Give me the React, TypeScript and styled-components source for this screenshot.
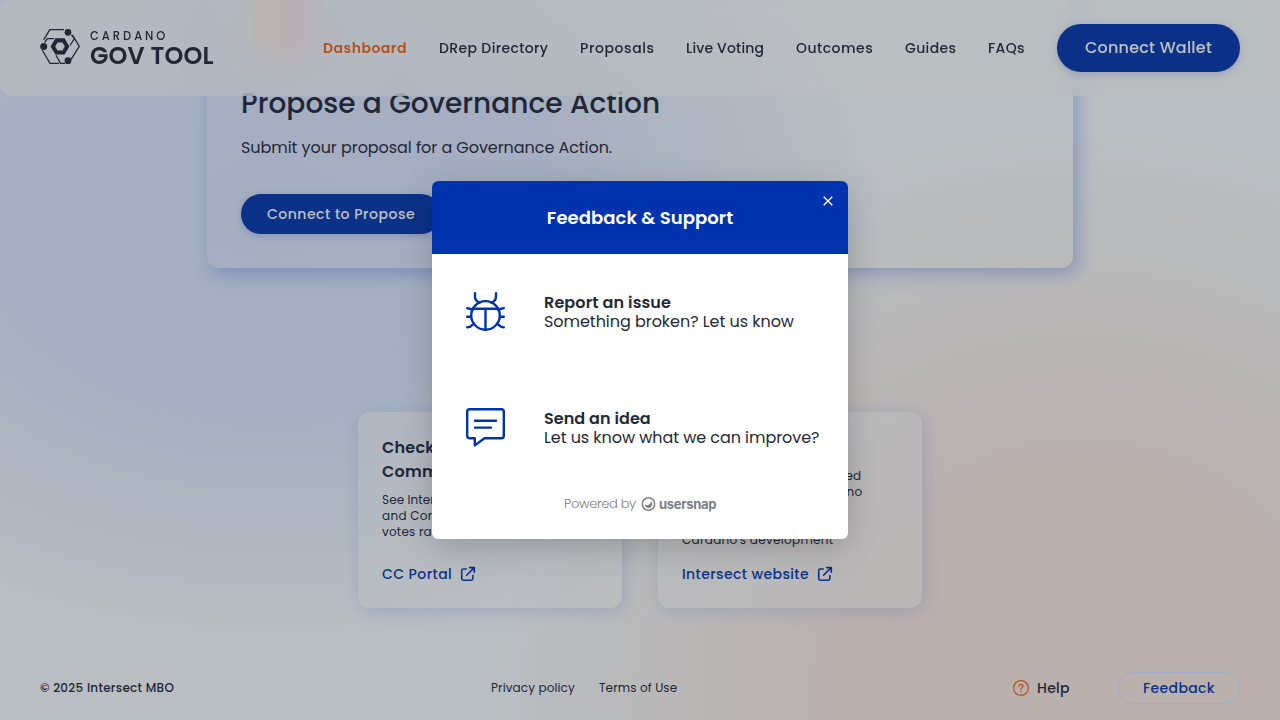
import React from "react";
import styled, { createGlobalStyle } from "styled-components";

const GlobalStyle = createGlobalStyle`
  * { box-sizing: border-box; }
  body { margin: 0; overflow: hidden; }
  h1, h2, p { margin: 0; }
  button { border: 0; padding: 0; background: none; font: inherit; }
`;

const ink = "#212438";
const blue = "#0033ad";

const Page = styled.div`
  height: 720px;
  overflow: hidden;
  display: flex;
  flex-direction: column;
  font-family: Poppins, Inter, sans-serif;
  color: ${ink};
  background:
    radial-gradient(ellipse 590px 570px at 1080px 700px, rgb(251, 232, 224) 0%, rgba(251, 232, 224, 0.95) 42%, rgba(251, 234, 226, 0.5) 70%, rgba(251, 236, 230, 0) 100%),
    radial-gradient(ellipse 620px 440px at 270px 210px, rgb(221, 230, 252) 0%, rgba(221, 230, 252, 0.96) 45%, rgba(221, 231, 252, 0.45) 75%, rgba(221, 232, 252, 0) 100%),
    #fafdfe;
`;

const Text = styled.span<{ $size?: number; $line?: number; $weight?: number; $ls?: number; $color?: string; $width?: number }>`
  display: block;
  white-space: nowrap;
  font-size: ${(p) => p.$size ?? 14}px;
  line-height: ${(p) => p.$line ?? 20}px;
  font-weight: ${(p) => p.$weight ?? 400};
  letter-spacing: ${(p) => p.$ls ?? 0}px;
  color: ${(p) => p.$color ?? "inherit"};
  width: ${(p) => (p.$width ? `${p.$width}px` : "auto")};
`;

const Header = styled.header`
  position: fixed;
  inset: 0 0 auto 0;
  height: 96px;
  padding: 0 40px;
  display: flex;
  align-items: center;
  justify-content: space-between;
  border-radius: 12px;
  background: rgba(251, 252, 251, 0.65);
  backdrop-filter: blur(10px);
`;

const Brand = styled.div`
  display: flex;
  gap: 10px;
  height: 38px;
`;

const BrandName = styled.div`
  display: flex;
  flex-direction: column;
`;

const Nav = styled.nav`
  display: flex;
  align-items: center;
  gap: 32px;
`;

const Pill = styled.button<{ $w: number; $h: number }>`
  width: ${(p) => p.$w}px;
  height: ${(p) => p.$h}px;
  border-radius: ${(p) => p.$h / 2}px;
  display: flex;
  align-items: center;
  justify-content: center;
  background: ${blue};
  color: #fff;
  box-shadow: 0 2px 8px rgba(0, 51, 173, 0.22);
`;

const Hero = styled.section`
  flex: none;
  position: relative;
  width: 866px;
  height: 268px;
  margin: 0 auto;
  padding: 85px 34px 0;
  border-radius: 0 0 12px 12px;
`;

/* The panel is see-through, so its shadow is clipped away from the inside. */
const HeroShadow = styled.div`
  position: absolute;
  inset: 0;
  border-radius: 0 0 12px 12px;
  box-shadow: 5px 6px 18px rgba(47, 98, 220, 0.34);
  clip-path: polygon(evenodd, -40px 0, 910px 0, 910px 310px, -40px 310px, -40px 0, 0 0, 0 256px, 1px 261px, 4px 265px, 7px 267px, 12px 268px, 854px 268px, 859px 267px, 862px 265px, 865px 261px, 866px 256px, 866px 0, 0 0);
`;

const Glow = styled.div`
  position: absolute;
  left: 38px;
  top: -20px;
  width: 76px;
  height: 82px;
  border-radius: 45%;
  background: linear-gradient(90deg, #ffdcb4 15%, #ffb0b8 60%, #eccdf2);
  filter: blur(6px);
  opacity: 0.8;
`;

const Lead = styled.div`
  margin-top: 13px;
`;

const HeroButton = styled.div`
  margin-top: 34px;
`;

const Cards = styled.section`
  flex: none;
  display: flex;
  justify-content: center;
  gap: 36px;
  margin-top: 144px;
`;

const Card = styled.article`
  width: 264px;
  height: 196px;
  padding: 24px;
  border-radius: 12px;
  display: flex;
  flex-direction: column;
  background: rgba(251, 251, 251, 0.5);
  box-shadow: 2px 3px 18px rgba(47, 98, 220, 0.2);
`;

const Copy = styled.div`
  margin-top: 8px;
`;

const CardLink = styled.a`
  margin-top: auto;
  height: 20px;
  display: flex;
  align-items: center;
  gap: 8px;
  color: ${blue};
`;

const Footer = styled.footer`
  flex: none;
  display: grid;
  grid-template-columns: 451px 1fr auto;
  align-items: center;
  height: 64px;
  margin-top: 48px;
  padding: 0 40px;
`;

const Group = styled.div<{ $gap: number }>`
  display: flex;
  align-items: center;
  gap: ${(p) => p.$gap}px;
`;

const FeedbackButton = styled.button`
  width: 122px;
  height: 32px;
  border-radius: 16px;
  border: 1px solid #d6e2ff;
  display: flex;
  align-items: center;
  justify-content: center;
`;

const Backdrop = styled.div`
  position: fixed;
  inset: 0;
  display: flex;
  align-items: center;
  justify-content: center;
  background: rgba(38, 46, 56, 0.3);
`;

const Dialog = styled.div`
  position: relative;
  width: 416px;
  height: 358px;
  overflow: hidden;
  border-radius: 6px;
  background: #fff;
  color: #1f2a37;
`;

const DialogShadow = styled.div`
  border-radius: 6px;
  box-shadow: 0 8px 34px rgba(0, 0, 0, 0.2);
`;

const DialogTitle = styled.div`
  height: 73px;
  display: flex;
  align-items: center;
  justify-content: center;
  background: ${blue};
  color: #fff;
`;

const Close = styled.button`
  position: absolute;
  top: 15px;
  right: 15px;
  width: 10px;
  height: 10px;
  display: flex;
`;

const Option = styled.div`
  height: 116px;
  padding-left: 34px;
  display: flex;
  align-items: center;
  gap: 39px;

  > svg { margin-bottom: 1px; }
`;

const Powered = styled.div`
  display: flex;
  align-items: center;
  padding-left: 132px;
  height: 36px;
`;

const Brandmark = styled.span`
  margin-left: 3px;
  font: 700 13px/20px Inter, sans-serif;
  letter-spacing: -0.3px;
  color: #79808a;
`;

const LogoMark = () => (
  <svg width="40" height="36" viewBox="0 0 40 36" fill="none" stroke={ink} strokeWidth="1.3">
    <path d="M3.6 10.8 9.8.7H24M4.6 13.6 7.3 9.7H14M2.2 21 10 34.3H19M16 26.3 20.5 34.3H25" />
    <path d="M32.5 6.2 39.3 17.4 30.6 31.2M31.5 6 34.4 9.5 30 16.5" />
    <g fill={ink} stroke="none">
      <circle cx="28" cy="3.3" r="3.4" />
      <circle cx="3.7" cy="17.4" r="3.5" />
      <circle cx="28" cy="31.7" r="3.4" />
      <path fillRule="evenodd" d="M15.4 9.2h9.2l4.8 8.2-4.8 8.2h-9.2l-4.8-8.2zM17.5 13.4l-2.3 4 2.3 4h5l2.3-4-2.3-4z" />
    </g>
  </svg>
);

const ExternalIcon = () => (
  <svg width="16" height="16" viewBox="0 0 16 16" fill="none" stroke={blue} strokeWidth="1.6" strokeLinecap="round" strokeLinejoin="round">
    <path d="M6.2 3H3.4C2.3 3 1.7 3.6 1.7 4.6V12.6C1.7 13.6 2.3 14.2 3.4 14.2H11.2C12.3 14.2 12.9 13.6 12.9 12.6V9.6M9.6 1.6H14.3V6.3M14 1.9 6.6 9.3" />
  </svg>
);

const HelpIcon = () => (
  <svg width="16" height="16" viewBox="0 0 16 16" fill="none" stroke="#f26114" strokeWidth="1.2" strokeLinecap="round">
    <circle cx="8" cy="8" r="7.4" />
    <path d="M6 6.2C6 5 6.9 4.3 8 4.3s2 .7 2 1.8C10 7.5 8 7.5 8 9.2" />
    <circle cx="8" cy="11.5" r=".25" />
  </svg>
);

const BugIcon = () => (
  <svg width="39" height="39" viewBox="0 0 39 39" fill="none" stroke={blue} strokeWidth="2.4" strokeLinecap="round">
    <circle cx="19.5" cy="23.4" r="14.3" />
    <path d="M7 16.8H32M19.5 17V37.5M9 1.2V4.4C9 7.4 10.5 9.4 13.6 10.7M30 1.2V4.4C30 7.4 28.5 9.4 25.4 10.7M1.2 16.2 7 17.5M37.8 16.2 32 17.5M1.2 24.7H5M37.8 24.7H34M1.2 35.3 4.2 34.6 8 31.5M37.8 35.3 34.8 34.6 31 31.5" />
  </svg>
);

const IdeaIcon = () => (
  <svg width="39" height="39" viewBox="0 0 39 39" fill="none" stroke={blue} strokeWidth="2.4" strokeLinecap="round" strokeLinejoin="round">
    <path d="M3.7 1.2H35.3Q37.8 1.2 37.8 3.7V27.7Q37.8 30.2 35.3 30.2H18.5L8.8 37.4V30.2H3.7Q1.2 30.2 1.2 27.7V3.7Q1.2 1.2 3.7 1.2ZM9 12.7H30M9 19.6H25" />
  </svg>
);

const SnapIcon = () => (
  <svg width="15" height="14" viewBox="0 0 15 14">
    <circle cx="7.5" cy="7" r="6.2" fill="none" stroke="#79808a" strokeWidth="1.5" />
    <path d="M3.7 7.3C6 9.3 9.1 8.3 10.2 4.3 12.5 7 10.8 11 7.5 11 5.5 11 4 9.5 3.7 7.3Z" fill="#79808a" />
  </svg>
);

const navItems = [
  { label: "DRep Directory", width: 109, ls: 0.36 },
  { label: "Proposals", width: 74, ls: 0.6 },
  { label: "Live Voting", width: 78, ls: 0.17 },
  { label: "Outcomes", width: 77, ls: 0.48 },
  { label: "Guides", width: 51, ls: 0.35 },
  { label: "FAQs", width: 37, ls: 0.35 },
];

export default function App() {
  return (
    <Page>
      <GlobalStyle />
      <Hero>
        <HeroShadow />
        <Glow />
        <Text as="h1" $size={28} $line={38} $weight={500} $ls={0.03}>Propose a Governance Action</Text>
        <Lead>
          <Text as="p" $size={16} $line={24} $ls={-0.06}>Submit your proposal for a Governance Action.</Text>
        </Lead>
        <HeroButton>
          <Pill $w={200} $h={40}>
            <Text $weight={500} $ls={0.52}>Connect to Propose</Text>
          </Pill>
        </HeroButton>
      </Hero>

      <Cards>
        <Card>
          <Text as="h2" $size={16} $line={24} $weight={600} $ls={0.25}>Check<br />Committee</Text>
          <Copy>
            <Text $size={12} $line={16} $ls={0.1}>See Intersect</Text>
            <Text $size={12} $line={16} $ls={0.3}>and Committee</Text>
            <Text $size={12} $line={16} $ls={0.2}>votes rationale</Text>
          </Copy>
          <CardLink><Text $weight={500} $ls={0.43}>CC Portal</Text><ExternalIcon /></CardLink>
        </Card>
        <Card>
          <Text as="h2" $size={16} $line={24} $weight={600}>Intersect</Text>
          <Copy>
            <Text $size={12} $line={16} $ls={0.12}>Intersect is a member-based</Text>
            <Text $size={12} $line={16} $ls={0.23}>organization for the Cardano</Text>
            <Text $size={12} $line={16}>ecosystem, putting its</Text>
            <Text $size={12} $line={16}>members at the heart of</Text>
            <Text $size={12} $line={16} $ls={0.3}>Cardano's development</Text>
          </Copy>
          <CardLink><Text $weight={500} $ls={0.41}>Intersect website</Text><ExternalIcon /></CardLink>
        </Card>
      </Cards>

      <Footer>
        <Text $size={12} $weight={500} $ls={0.28}>© 2025 Intersect MBO</Text>
        <Group $gap={24}>
          <Text $size={12} $width={84} $ls={0.12}>Privacy policy</Text>
          <Text $size={12} $ls={0.12}>Terms of Use</Text>
        </Group>
        <Group $gap={48}>
          <Group $gap={8}><HelpIcon /><Text $weight={500} $width={33} $ls={0.3}>Help</Text></Group>
          <FeedbackButton><Text $weight={500} $ls={0.35} $color={blue}>Feedback</Text></FeedbackButton>
        </Group>
      </Footer>

      <Header>
        <Brand>
          <LogoMark />
          <BrandName>
            <Text $size={11.5} $line={14} $weight={500} $ls={2.95}>CARDANO</Text>
            <Text $size={24} $line={25} $weight={600} $ls={0.13}>GOV TOOL</Text>
          </BrandName>
        </Brand>
        <Nav>
          <Text $weight={600} $width={84} $ls={0.5} $color="#f26114">Dashboard</Text>
          {navItems.map((n) => (
            <Text key={n.label} $weight={500} $width={n.width} $ls={n.ls}>{n.label}</Text>
          ))}
          <Pill $w={183} $h={48}>
            <Text $size={16} $weight={500} $ls={0.22}>Connect Wallet</Text>
          </Pill>
        </Nav>
      </Header>

      <Backdrop>
        <DialogShadow>
          <Dialog>
            <DialogTitle><Text $size={18} $line={24} $weight={600} $ls={0.06}>Feedback &amp; Support</Text></DialogTitle>
            <Close aria-label="Close">
              <svg width="10" height="10" viewBox="0 0 10 10" stroke="#fff" strokeWidth="1.4"><path d="M.7.7 9.3 9.3M9.3.7.7 9.3" /></svg>
            </Close>
            <Option>
              <BugIcon />
              <div>
                <Text $size={16} $line={19} $weight={600} $ls={0.12}>Report an issue</Text>
                <Text $size={16} $line={19} $ls={-0.04}>Something broken? Let us know</Text>
              </div>
            </Option>
            <Option>
              <IdeaIcon />
              <div>
                <Text $size={16} $line={19} $weight={600} $ls={0.05}>Send an idea</Text>
                <Text $size={16} $line={19} $ls={-0.06}>Let us know what we can improve?</Text>
              </div>
            </Option>
            <Powered>
              <Text $size={13} $weight={300} $width={77} $ls={-0.35} $color="#79808a">Powered by</Text>
              <SnapIcon />
              <Brandmark>usersnap</Brandmark>
            </Powered>
          </Dialog>
        </DialogShadow>
      </Backdrop>
    </Page>
  );
}
